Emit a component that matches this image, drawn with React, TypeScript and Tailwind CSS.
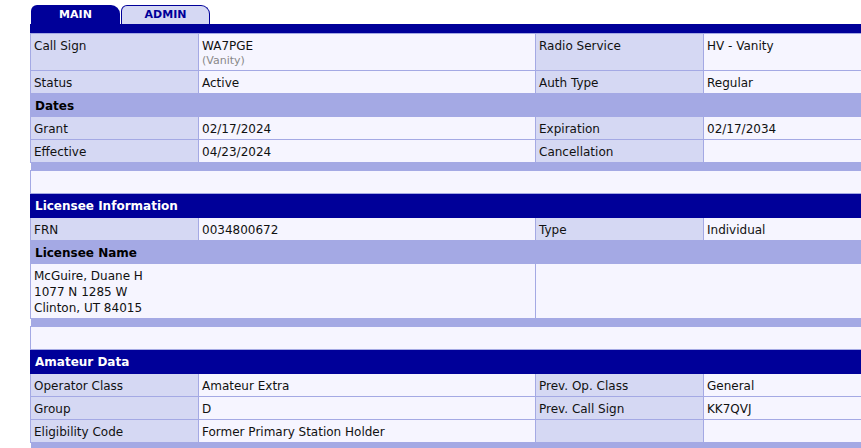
const navy = "bg-[#000099]";

function Label({ children }: { children?: React.ReactNode }) {
  return (
    <td className="border border-[#a4a9e4] bg-[#d5d8f3] px-[3px] pt-[4px] pb-[2px] align-top">
      {children}
    </td>
  );
}

function Value({ children, span }: { children?: React.ReactNode; span?: number }) {
  return (
    <td colSpan={span} className="border border-[#a4a9e4] bg-[#f6f5ff] px-[3px] pt-[4px] pb-[2px] align-top">
      {children}
    </td>
  );
}

function Band() {
  return (
    <tr>
      <td colSpan={4} className="h-[8px] bg-[#a4a9e4] p-0" />
    </tr>
  );
}

function Blank() {
  return (
    <tr>
      <td colSpan={4} className="h-[23px] border border-[#a4a9e4] bg-[#f6f5ff] p-0" />
    </tr>
  );
}

function SectionHead({ title }: { title: string }) {
  return (
    <tr>
      <td colSpan={4} className={`${navy} border border-[#000099] px-[4px] pt-[4px] pb-[3px] font-bold text-white`}>
        {title}
      </td>
    </tr>
  );
}

function SubHead({ title }: { title: string }) {
  return (
    <tr>
      <td colSpan={4} className="border border-[#a4a9e4] bg-[#a4a9e4] px-[4px] pt-[4px] pb-[2px] font-bold text-black">
        {title}
      </td>
    </tr>
  );
}

export default function App() {
  return (
    <div className="h-[448px] w-[861px] overflow-hidden bg-white font-['DejaVu_Sans',Verdana,sans-serif] text-[12px] leading-[16px] text-[#111]">
      <div className="pl-[30px] pt-[5px]">
        <div className="flex gap-[1px] pl-[1px]">
          <div className={`${navy} flex h-[19px] w-[89px] items-center justify-center rounded-tl-[6px] rounded-tr-[9px] text-[11px] font-bold text-white`}>
            MAIN
          </div>
          <div className="flex h-[19px] w-[89px] items-center justify-center rounded-tl-[6px] rounded-tr-[9px] border border-b-0 border-[#000099] bg-[#d5d8f3] text-[11px] font-bold text-[#000099]">
            ADMIN
          </div>
        </div>
        <div className={`${navy} h-[9px] w-[900px]`} />
        <table className="w-[900px] table-fixed border-collapse">
          <colgroup>
            <col className="w-[168px]" />
            <col className="w-[337px]" />
            <col className="w-[168px]" />
            <col />
          </colgroup>
          <tbody>
            <tr>
              <Label>Call Sign</Label>
              <Value>
                <div>WA7PGE</div>
                <div className="pb-[1px] text-[11px] leading-[13px] text-[#888]">(Vanity)</div>
              </Value>
              <Label>Radio Service</Label>
              <Value>HV - Vanity</Value>
            </tr>
            <tr>
              <Label>Status</Label>
              <Value>Active</Value>
              <Label>Auth Type</Label>
              <Value>Regular</Value>
            </tr>
            <SubHead title="Dates" />
            <tr>
              <Label>Grant</Label>
              <Value>02/17/2024</Value>
              <Label>Expiration</Label>
              <Value>02/17/2034</Value>
            </tr>
            <tr>
              <Label>Effective</Label>
              <Value>04/23/2024</Value>
              <Label>Cancellation</Label>
              <Value />
            </tr>
            <Band />
            <Blank />
            <SectionHead title="Licensee Information" />
            <tr>
              <Label>FRN</Label>
              <Value>0034800672</Value>
              <Label>Type</Label>
              <Value>Individual</Value>
            </tr>
            <SubHead title="Licensee Name" />
            <tr>
              <Value span={2}>
                McGuire, Duane H
                <br />
                1077 N 1285 W
                <br />
                Clinton, UT 84015
              </Value>
              <Value span={2} />
            </tr>
            <Band />
            <Blank />
            <SectionHead title="Amateur Data" />
            <tr>
              <Label>Operator Class</Label>
              <Value>Amateur Extra</Value>
              <Label>Prev. Op. Class</Label>
              <Value>General</Value>
            </tr>
            <tr>
              <Label>Group</Label>
              <Value>D</Value>
              <Label>Prev. Call Sign</Label>
              <Value>KK7QVJ</Value>
            </tr>
            <tr>
              <Label>Eligibility Code</Label>
              <Value>Former Primary Station Holder</Value>
              <Label />
              <Value />
            </tr>
            <Band />
          </tbody>
        </table>
      </div>
    </div>
  );
}
